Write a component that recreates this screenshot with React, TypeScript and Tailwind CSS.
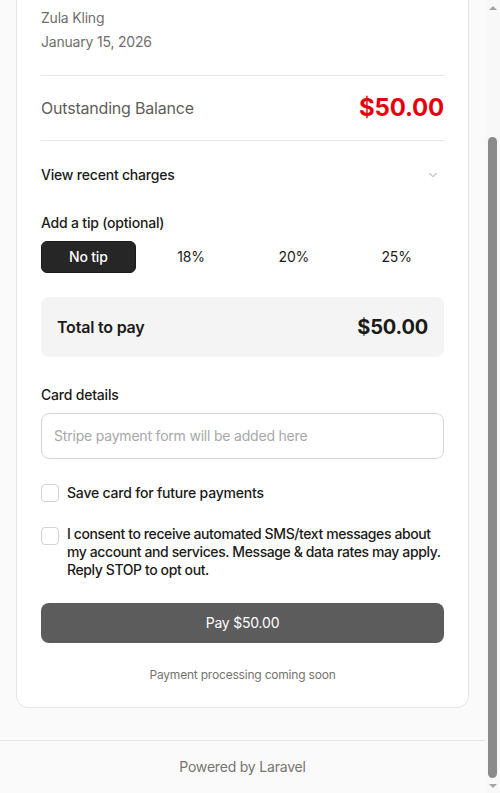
import { useEffect, useRef, useState } from "react";
import { ChevronDown } from "lucide-react";

const tips = [
  { id: "none", label: "No tip" },
  { id: "18", label: "18%" },
  { id: "20", label: "20%" },
  { id: "25", label: "25%" },
];

export default function App() {
  const scrollRef = useRef<HTMLDivElement>(null);
  const [tip, setTip] = useState("none");
  const [saveCard, setSaveCard] = useState(false);
  const [smsConsent, setSmsConsent] = useState(false);

  // page is shown scrolled to the bottom
  useEffect(() => {
    const el = scrollRef.current;
    if (el) el.scrollTop = el.scrollHeight;
  }, []);

  return (
    <div className="flex h-[793px] bg-[#fafafa] font-['Inter','Noto_Sans',sans-serif] tracking-[-0.2px] text-[#1b1b18]">
      <div ref={scrollRef} className="flex-1 overflow-y-scroll [scrollbar-width:none]">
        <main className="px-4 pt-8 pb-8">
          <div className="rounded-xl border border-[#e6e6e6] bg-white p-6">
            {/* Header */}
            <div className="mb-6 flex h-12 items-center gap-3">
              <div className="flex h-12 w-12 items-center justify-center rounded-lg bg-[#1b1b18] text-lg font-semibold text-white">
                A
              </div>
              <div>
                <h1 className="text-lg font-semibold leading-6">Pay your balance</h1>
                <p className="text-sm leading-5 text-[#706f6c]">Account statement</p>
              </div>
            </div>
            <p className="mb-[13px] text-xs leading-4 uppercase tracking-wide text-[#a1a09a]">Billed to</p>

            {/* Customer */}
            <div className="text-sm leading-6 text-[#706f6c]">
              <p>Zula Kling</p>
              <p>January 15, 2026</p>
            </div>

            <div className="mt-[21px] flex items-center justify-between border-y border-[#e6e6e6] py-4">
              <span className="text-base text-[#5f5e5a]">Outstanding Balance</span>
              <span className="text-2xl leading-8 font-bold text-red-600">$50.00</span>
            </div>

            {/* Recent charges */}
            <button className="flex w-full items-center justify-between py-6 text-left text-sm leading-5 font-medium">
              View recent charges
              <ChevronDown className="mr-1 h-3.5 w-3.5 text-[#c9c9c9]" />
            </button>

            {/* Tip */}
            <p className="mt-1 mb-2 text-sm leading-5 font-medium">Add a tip (optional)</p>
            <div className="grid grid-cols-4 gap-2">
              {tips.map((t) =>
                t.id === tip ? (
                  <button
                    key={t.id}
                    onClick={() => setTip(t.id)}
                    className="h-8 rounded-md border border-[#1b1b1b] bg-[#262626] text-sm font-medium text-white"
                  >
                    {t.label}
                  </button>
                ) : (
                  <button
                    key={t.id}
                    onClick={() => setTip(t.id)}
                    className="h-8 rounded-md text-sm text-[#1b1b18]"
                  >
                    {t.label}
                  </button>
                )
              )}
            </div>

            {/* Total */}
            <div className="mt-6 flex items-center justify-between rounded-lg bg-[#f4f4f4] px-4 py-4">
              <span className="text-base font-semibold">Total to pay</span>
              <span className="text-xl leading-7 font-bold">$50.00</span>
            </div>

            {/* Card */}
            <p className="mt-7 mb-2 text-sm leading-5 font-medium">Card details</p>
            <div className="rounded-lg border border-[#d6d6d6] px-3 py-3 text-sm leading-5 text-[#a8a8a8]">
              Stripe payment form will be added here
            </div>

            <label className="mt-6 flex items-center gap-2 text-sm leading-5 font-medium">
              <input
                type="checkbox"
                checked={saveCard}
                onChange={(e) => setSaveCard(e.target.checked)}
                className="h-[18px] w-[18px] appearance-none rounded border border-[#d4d4d4] bg-white"
              />
              Save card for future payments
            </label>

            <label className="mt-[22px] flex items-start gap-2 text-sm leading-[18px] font-medium tracking-[-0.4px]">
              <input
                type="checkbox"
                checked={smsConsent}
                onChange={(e) => setSmsConsent(e.target.checked)}
                className="mt-0.5 h-[18px] w-[18px] shrink-0 appearance-none rounded border border-[#d4d4d4] bg-white"
              />
              I consent to receive automated SMS/text messages about my account and services. Message &amp; data rates may apply. Reply STOP to opt out.
            </label>

            <button
              disabled
              className="mt-6 h-10 w-full rounded-lg bg-[#5c5c5c] text-sm text-white"
            >
              Pay $50.00
            </button>

            <p className="mt-6 text-center text-xs leading-4 text-[#757470]">Payment processing coming soon</p>
          </div>
        </main>

        <footer className="border-t border-[#e6e6e6] py-4 text-center text-sm leading-5 text-[#757470]">
          Powered by Laravel
        </footer>
      </div>

      {/* scrollbar */}
      <div className="flex w-[15px] flex-col bg-[#f8f8f8]">
        <div className="flex h-[15px] items-center justify-center">
          <div className="h-0 w-0 border-x-[4px] border-b-[4px] border-x-transparent border-b-[#a3a3a3]" />
        </div>
        <div className="flex flex-1 flex-col justify-end px-[3px]">
          <div className="h-[641px] rounded-full bg-[#8b8b8b]" />
        </div>
        <div className="flex h-[15px] items-center justify-center">
          <div className="h-0 w-0 border-x-[4px] border-t-[4px] border-x-transparent border-t-[#a3a3a3]" />
        </div>
      </div>
    </div>
  );
}
